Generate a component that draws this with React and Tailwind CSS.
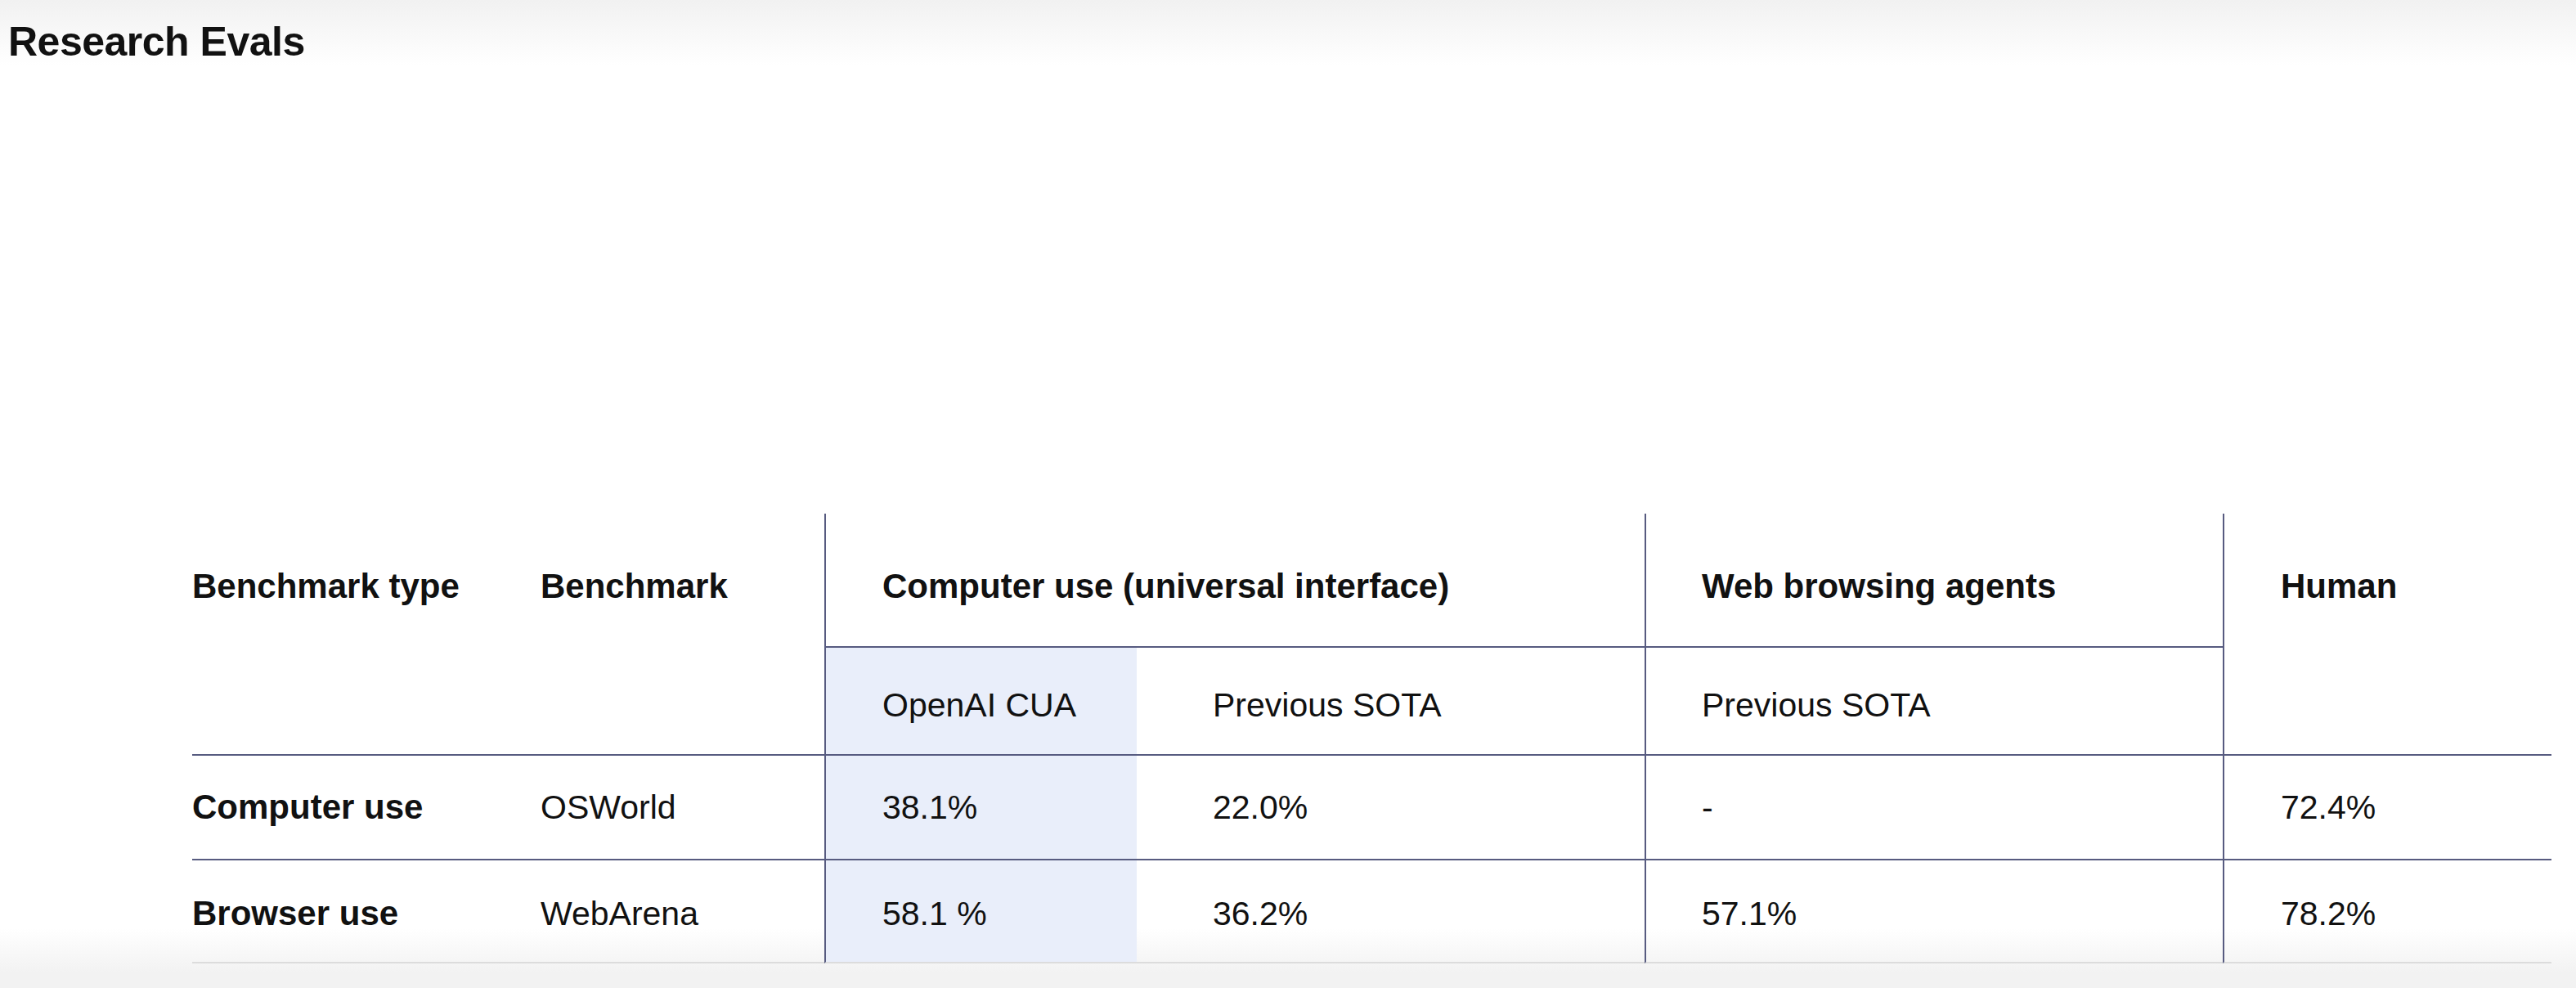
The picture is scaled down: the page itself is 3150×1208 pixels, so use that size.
import React from "react";

const line = "border-[#575b80]";
const head = "font-bold text-[42px]";

function Cell({ className = "", children }) {
  return <div className={`flex ${className}`}>{children}</div>;
}

export default function App() {
  return (
    <div
      className="h-[1208px] w-full overflow-hidden bg-[linear-gradient(to_bottom,#f1f1f1_0px,#ffffff_80px,#ffffff_1135px,#f2f2f2_1190px)] text-[#111] font-['Liberation_Sans',Arial,sans-serif]"
    >
      <h1 className="pl-[10px] pt-[22px] text-[50px] leading-[58px] font-bold tracking-[-0.5px]">
        Research Evals
      </h1>

      <div className="mt-[548px] pl-[235px]">
        <div className="grid grid-cols-[426px_347px_382px_621px_707px_402px] grid-rows-[164px_130px_128px_128px] text-[41px] leading-[48px]">
          {/* header, first row */}
          <Cell className={`row-span-2 items-start pt-[65px] ${head}`}>Benchmark type</Cell>
          <Cell className={`row-span-2 items-start pt-[65px] ${head}`}>Benchmark</Cell>
          <Cell className={`col-span-2 items-start pt-[65px] pl-[69px] border-l-2 border-b-2 ${line} ${head}`}>
            Computer use (universal interface)
          </Cell>
          <Cell className={`items-start pt-[65px] pl-[68px] border-l-2 border-b-2 ${line} ${head}`}>
            Web browsing agents
          </Cell>
          <Cell className={`row-span-2 items-start pt-[65px] pl-[69px] border-l-2 ${line} ${head}`}>
            Human
          </Cell>

          {/* header, second row */}
          <Cell className={`items-center pt-[10px] pl-[69px] border-l-2 ${line} bg-[#e9eefa]`}>OpenAI CUA</Cell>
          <Cell className="items-center pt-[10px] pl-[93px]">Previous SOTA</Cell>
          <Cell className={`items-center pt-[10px] pl-[68px] border-l-2 ${line}`}>Previous SOTA</Cell>

          {/* Computer use */}
          <Cell className={`items-center border-t-2 ${line} ${head}`}>Computer use</Cell>
          <Cell className={`items-center border-t-2 ${line}`}>OSWorld</Cell>
          <Cell className={`items-center pl-[69px] border-t-2 border-l-2 ${line} bg-[#e9eefa]`}>38.1%</Cell>
          <Cell className={`items-center pl-[93px] border-t-2 ${line}`}>22.0%</Cell>
          <Cell className={`items-center pl-[68px] border-t-2 border-l-2 ${line}`}>-</Cell>
          <Cell className={`items-center pl-[69px] border-t-2 border-l-2 ${line}`}>72.4%</Cell>

          {/* Browser use */}
          <Cell className={`items-center pt-[6px] border-t-2 ${line} border-b-2 border-b-[#dcdcdc] ${head}`}>Browser use</Cell>
          <Cell className={`items-center pt-[6px] border-t-2 ${line} border-b-2 border-b-[#dcdcdc]`}>WebArena</Cell>
          <Cell className={`items-center pt-[6px] pl-[69px] border-t-2 border-l-2 ${line} border-b-2 border-b-[#dcdcdc] bg-[#e9eefa]`}>58.1 %</Cell>
          <Cell className={`items-center pt-[6px] pl-[93px] border-t-2 ${line} border-b-2 border-b-[#dcdcdc]`}>36.2%</Cell>
          <Cell className={`items-center pt-[6px] pl-[68px] border-t-2 border-l-2 ${line} border-b-2 border-b-[#dcdcdc]`}>57.1%</Cell>
          <Cell className={`items-center pt-[6px] pl-[69px] border-t-2 border-l-2 ${line} border-b-2 border-b-[#dcdcdc]`}>78.2%</Cell>
        </div>
      </div>
    </div>
  );
}
